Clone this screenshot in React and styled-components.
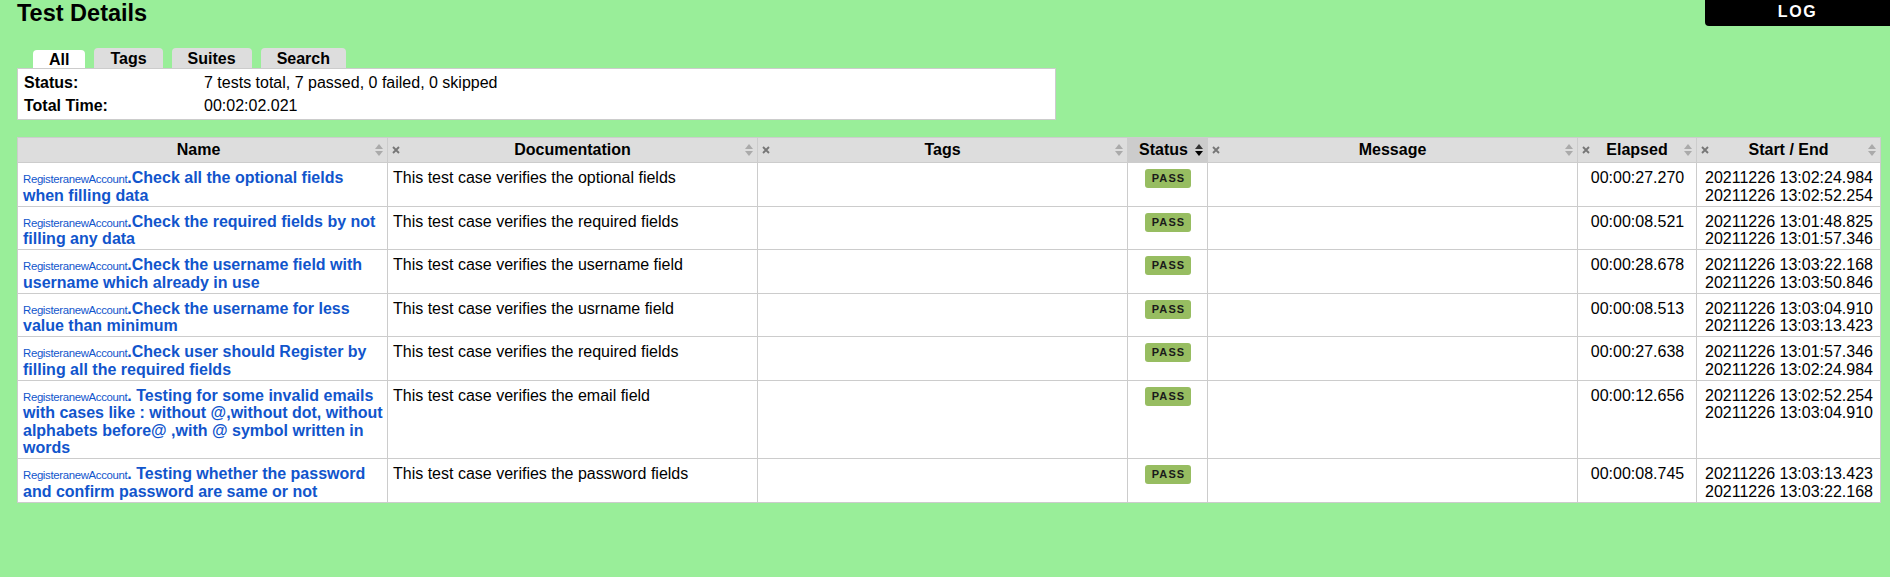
import React from 'react'
import styled, { createGlobalStyle } from 'styled-components'

const GlobalStyle = createGlobalStyle`
  html, body {
    margin: 0;
    min-height: 100%;
    background: #99ee99;
  }
  body {
    font-family: 'Liberation Sans', Arial, Helvetica, sans-serif;
    font-size: 16px;
    color: black;
  }
`

const Page = styled.div`
  padding: 0 10px 20px 17px;
`

const TopBar = styled.div`
  display: flex;
  justify-content: space-between;
  align-items: flex-start;
  margin-right: -10px;
`

const Title = styled.h2`
  margin: 0;
  padding-top: 0;
  font-size: 23.5px;
  font-weight: bold;
  line-height: 27px;
`

const LogLink = styled.a`
  display: block;
  width: 185px;
  text-align: center;
  background: black;
  color: white;
  font-weight: bold;
  text-decoration: none;
  letter-spacing: 0.1em;
  line-height: 18.4px;
  padding: 3px 0 5px;
  border-bottom-left-radius: 4px;
`

const Tabs = styled.div`
  display: flex;
  align-items: flex-end;
  gap: 9px;
  padding-left: 16px;
  margin-top: 21px;
`

const Tab = styled.div`
  background: ${(p) => (p.$active ? 'white' : '#dddddd')};
  height: ${(p) => (p.$active ? '18px' : '20px')};
  line-height: ${(p) => (p.$active ? '19px' : '21px')};
  padding: 0 16px;
  font-weight: bold;
  border-radius: 4px 4px 0 0;
  cursor: pointer;
`

const Summary = styled.table`
  width: 1039px;
  background: white;
  border: 1px solid #cccccc;
  border-collapse: separate;
  border-spacing: 0;
  padding: 2px 0;
  line-height: 19px;

  th {
    width: 168px;
    text-align: left;
    padding: 2px 6px;
  }
  td {
    padding: 2px 6px;
  }
`

const Details = styled.table`
  width: 100%;
  margin-top: 17px;
  table-layout: fixed;
  border-collapse: collapse;
  background: white;
`

const Th = styled.th`
  background: ${(p) => (p.$sorted ? '#cccccc' : '#dddddd')};
  border: 1px solid #cccccc;
  padding: 0 4px;
  height: 24px;
  font-weight: bold;
`

const HeadInner = styled.div`
  display: flex;
  align-items: center;
  line-height: 18.4px;
`

const HeadText = styled.span`
  flex: 1;
  text-align: center;
`

const Td = styled.td`
  border: 1px solid #cccccc;
  vertical-align: top;
  padding: 6px 4px 1.5px 5px;
  line-height: 17.5px;
  text-align: ${(p) => p.$align || 'left'};
`

const ParentName = styled.span`
  font-size: 11.4px;
  line-height: 1;
  letter-spacing: -0.03em;
  color: #1155cc;
`

const TestName = styled.a`
  color: #1155cc;
  font-weight: bold;
  text-decoration: none;
`

const Label = styled.span`
  display: inline-block;
  vertical-align: top;
  background: #97bd61;
  color: #1a1a1a;
  font-size: 11px;
  font-weight: bold;
  letter-spacing: 0.1em;
  line-height: 19px;
  padding: 0 6px 0 7px;
  border-radius: 3px;
`

const SortIcon = ({ active }) => (
  <svg width="8" height="12" viewBox="0 0 8 12" style={{ flex: 'none' }}>
    <polygon points="0,5 4,0 8,5" fill={active ? '#333' : '#aaaaaa'} />
    <polygon points="0,7 4,12 8,7" fill={active ? '#000' : '#aaaaaa'} />
  </svg>
)

const HideIcon = () => (
  <svg width="8" height="8" viewBox="0 0 8 8" style={{ flex: 'none' }}>
    <path d="M1 1 L7 7 M7 1 L1 7" stroke="#777" strokeWidth="1.9" />
  </svg>
)

const columns = [
  { title: 'Name', width: 370 },
  { title: 'Documentation', width: 370, hide: true },
  { title: 'Tags', width: 370, hide: true },
  { title: 'Status', width: 80, sorted: true },
  { title: 'Message', width: 370, hide: true },
  { title: 'Elapsed', width: 119, hide: true },
  { title: 'Start / End', width: 184, hide: true },
]

const tests = [
  {
    name: 'Check all the optional fields when filling data',
    doc: 'This test case verifies the optional fields',
    elapsed: '00:00:27.270',
    start: '20211226 13:02:24.984',
    end: '20211226 13:02:52.254',
  },
  {
    name: 'Check the required fields by not filling any data',
    doc: 'This test case verifies the required fields',
    elapsed: '00:00:08.521',
    start: '20211226 13:01:48.825',
    end: '20211226 13:01:57.346',
  },
  {
    name: 'Check the username field with username which already in use',
    doc: 'This test case verifies the username field',
    elapsed: '00:00:28.678',
    start: '20211226 13:03:22.168',
    end: '20211226 13:03:50.846',
  },
  {
    name: 'Check the username for less value than minimum',
    doc: 'This test case verifies the usrname field',
    elapsed: '00:00:08.513',
    start: '20211226 13:03:04.910',
    end: '20211226 13:03:13.423',
  },
  {
    name: 'Check user should Register by filling all the required fields',
    doc: 'This test case verifies the required fields',
    elapsed: '00:00:27.638',
    start: '20211226 13:01:57.346',
    end: '20211226 13:02:24.984',
  },
  {
    name: ' Testing for some invalid emails with cases like : without @,without dot, without alphabets before@ ,with @ symbol written in words',
    doc: 'This test case verifies the email field',
    elapsed: '00:00:12.656',
    start: '20211226 13:02:52.254',
    end: '20211226 13:03:04.910',
  },
  {
    name: ' Testing whether the password and confirm password are same or not',
    doc: 'This test case verifies the password fields',
    elapsed: '00:00:08.745',
    start: '20211226 13:03:13.423',
    end: '20211226 13:03:22.168',
  },
]

export default function App() {
  return (
    <>
      <GlobalStyle />
      <Page>
        <TopBar>
          <Title>Test Details</Title>
          <LogLink href="#">LOG</LogLink>
        </TopBar>

        <Tabs>
          <Tab $active>All</Tab>
          <Tab>Tags</Tab>
          <Tab>Suites</Tab>
          <Tab>Search</Tab>
        </Tabs>
        <Summary>
          <tbody>
            <tr>
              <th>Status:</th>
              <td>7 tests total, 7 passed, 0 failed, 0 skipped</td>
            </tr>
            <tr>
              <th>Total Time:</th>
              <td>00:02:02.021</td>
            </tr>
          </tbody>
        </Summary>

        <Details>
          <colgroup>
            {columns.map((c) => (
              <col key={c.title} style={{ width: c.width }} />
            ))}
          </colgroup>
          <thead>
            <tr>
              {columns.map((c) => (
                <Th key={c.title} $sorted={c.sorted}>
                  <HeadInner>
                    {c.hide && <HideIcon />}
                    <HeadText>{c.title}</HeadText>
                    <SortIcon active={c.sorted} />
                  </HeadInner>
                </Th>
              ))}
            </tr>
          </thead>
          <tbody>
            {tests.map((t) => (
              <tr key={t.name}>
                <Td>
                  <ParentName>RegisteranewAccount</ParentName>
                  <TestName href="#">.{t.name}</TestName>
                </Td>
                <Td>{t.doc}</Td>
                <Td />
                <Td $align="center">
                  <Label>PASS</Label>
                </Td>
                <Td />
                <Td $align="center">{t.elapsed}</Td>
                <Td $align="center">
                  {t.start}
                  <br />
                  {t.end}
                </Td>
              </tr>
            ))}
          </tbody>
        </Details>
      </Page>
    </>
  )
}
